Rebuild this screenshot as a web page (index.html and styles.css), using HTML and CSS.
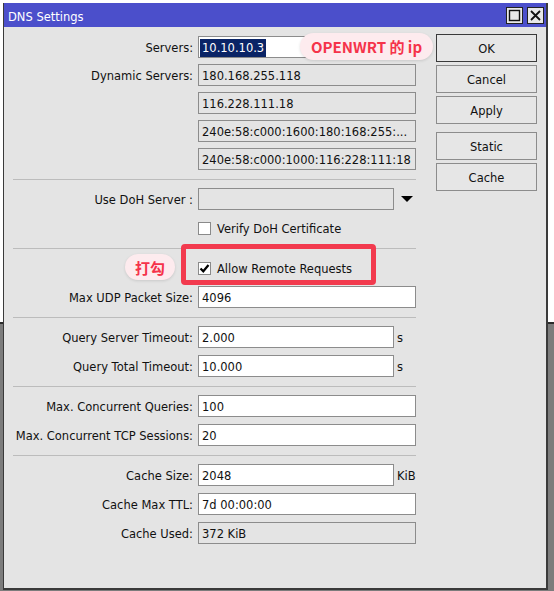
FILE: index.html
```html
<!DOCTYPE html>
<html>
<head>
<meta charset="utf-8">
<link rel="stylesheet" href="styles.css">
</head>
<body>
<div class="desktop">
  <div class="window">
    <div class="titlebar">
      <span class="title">DNS Settings</span>
      <div class="tbtns">
        <span class="tbtn"><svg width="13" height="13" viewBox="0 0 13 13"><rect x="1.5" y="1.5" width="10" height="10" fill="none" stroke="#111" stroke-width="1.4"/></svg></span>
        <span class="tbtn"><svg width="13" height="13" viewBox="0 0 13 13"><path d="M2 2 L11 11 M11 2 L2 11" stroke="#111" stroke-width="1.8" fill="none"/></svg></span>
      </div>
    </div>
    <div class="wbody">
      <div class="form">
        <div class="group g1">
          <div class="row"><label>Servers:</label><div class="field"><div class="input edit"><span class="sel">10.10.10.3</span></div></div></div>
          <div class="row"><label>Dynamic Servers:</label><div class="field"><div class="input ro">180.168.255.118</div></div></div>
          <div class="row"><label></label><div class="field"><div class="input ro">116.228.111.18</div></div></div>
          <div class="row"><label></label><div class="field"><div class="input ro">240e:58:c000:1600:180:168:255:...</div></div></div>
          <div class="row"><label></label><div class="field"><div class="input ro">240e:58:c000:1000:116:228:111:18</div></div></div>
        </div>
        <div class="sep"></div>
        <div class="group">
          <div class="row"><label>Use DoH Server :</label><div class="field"><div class="input ro short"></div><svg class="dd" width="12" height="6" viewBox="0 0 12 6"><polygon points="0,0 12,0 6,6" fill="#000"/></svg></div></div>
          <div class="row"><label></label><div class="field"><span class="cb"></span><span class="ctext">Verify DoH Certificate</span></div></div>
        </div>
        <div class="sep"></div>
        <div class="group">
          <div class="row"><label></label><div class="field"><span class="cb"><svg width="11" height="11" viewBox="0 0 11 11"><path d="M1.5 5.5 L4.3 8.3 L9.5 2" stroke="#000" stroke-width="2.2" fill="none"/></svg></span><span class="ctext">Allow Remote Requests</span></div></div>
          <div class="row"><label>Max UDP Packet Size:</label><div class="field"><div class="input edit">4096</div></div></div>
        </div>
        <div class="sep"></div>
        <div class="group">
          <div class="row"><label>Query Server Timeout:</label><div class="field"><div class="input edit short">2.000</div><span class="unit">s</span></div></div>
          <div class="row"><label>Query Total Timeout:</label><div class="field"><div class="input edit short">10.000</div><span class="unit">s</span></div></div>
        </div>
        <div class="sep"></div>
        <div class="group">
          <div class="row"><label>Max. Concurrent Queries:</label><div class="field"><div class="input edit">100</div></div></div>
          <div class="row"><label>Max. Concurrent TCP Sessions:</label><div class="field"><div class="input edit">20</div></div></div>
        </div>
        <div class="sep"></div>
        <div class="group">
          <div class="row"><label>Cache Size:</label><div class="field"><div class="input edit short">2048</div><span class="unit">KiB</span></div></div>
          <div class="row"><label>Cache Max TTL:</label><div class="field"><div class="input edit">7d 00:00:00</div></div></div>
          <div class="row"><label>Cache Used:</label><div class="field"><div class="input ro">372 KiB</div></div></div>
        </div>
      </div>
      <div class="buttons">
        <div class="btn def">OK</div>
        <div class="btn">Cancel</div>
        <div class="btn">Apply</div>
        <div class="btn spaced">Static</div>
        <div class="btn">Cache</div>
      </div>
    </div>
    <div class="badge openwrt">OPENWRT 的 ip</div>
    <div class="badge dagou">打勾</div>
    <div class="redbox"></div>
  </div>
</div>
</body>
</html>
```
FILE: styles.css
```css
html, body {
  margin: 0;
  padding: 0;
}
body {
  width: 554px;
  height: 591px;
  overflow: hidden;
  background: linear-gradient(#ffffff 0 322px, #2a2a2a 322px 324px, #7c7c7c 324px);
  font-family: "DejaVu Sans", sans-serif;
  font-size: 11.5px;
  color: #111;
}
.desktop {
  padding: 3px 0 0 3px;
}
.window {
  position: relative;
  width: 545px;
  height: 587px;
  box-sizing: border-box;
  background: #e4e4e4;
  border: 1px solid #3a3a3a;
  border-top: 0;
  border-right-width: 2px;
  border-bottom-width: 2px;
  display: flex;
  flex-direction: column;
}
.titlebar {
  height: 24px;
  background: #4b4fcb;
  color: #fff;
  display: flex;
  align-items: center;
  justify-content: space-between;
  padding-left: 4px;
  padding-right: 2px;
}
.title {
  line-height: 24px;
  padding-top: 3px;
}
.tbtns {
  display: flex;
  gap: 4px;
}
.tbtn {
  width: 17px;
  height: 17px;
  box-sizing: border-box;
  border: 1px solid #222;
  background: #e8e8e8;
  display: flex;
  align-items: center;
  justify-content: center;
}
.wbody {
  display: flex;
}
.form {
  width: 412px;
  box-sizing: border-box;
  padding: 9px 0 0 9px;
}
.group {
  display: flex;
  flex-direction: column;
  gap: 7px;
}
.g1 {
  gap: 6px;
}
.row {
  display: grid;
  grid-template-columns: 180px 218px;
  column-gap: 5px;
  height: 22px;
  align-items: center;
}
.row label {
  text-align: right;
  white-space: nowrap;
  padding-top: 2px;
}
.sep {
  width: 403px;
  height: 1px;
  background: #bcbcbc;
  margin: 9px 0 8px;
}
.field {
  display: flex;
  align-items: center;
  white-space: nowrap;
}
.input {
  width: 218px;
  height: 22px;
  box-sizing: border-box;
  border: 1px solid #8c8c8c;
  padding-left: 3px;
  padding-top: 2px;
  display: flex;
  align-items: center;
  overflow: hidden;
  white-space: nowrap;
}
.input.short {
  width: 196px;
}
.edit {
  background: #ffffff;
}
.ro {
  background: #e4e4e4;
}
.sel {
  background: #0a2466;
  color: #fff;
  margin-left: -2px;
  margin-top: -1px;
  padding: 0 2px;
  height: 18px;
  line-height: 19px;
}
.unit,
.ctext {
  padding-top: 2px;
}
.unit {
  margin-left: 3px;
}
.dd {
  margin-left: 7px;
}
.cb {
  width: 13px;
  height: 13px;
  box-sizing: border-box;
  border: 1px solid #8a8a8a;
  background: #fff;
  margin-right: 6px;
  display: flex;
  align-items: center;
  justify-content: center;
}
.buttons {
  width: 101px;
  margin-left: 20px;
  padding-top: 7px;
  display: flex;
  flex-direction: column;
  gap: 3px;
}
.btn {
  height: 28px;
  box-sizing: border-box;
  border: 1px solid #8c8c8c;
  background: #e6e6e6;
  padding-top: 2px;
  display: flex;
  align-items: center;
  justify-content: center;
}
.btn.def {
  border-color: #3a3a3a;
}
.btn.spaced {
  margin-top: 5px;
}
.badge {
  position: absolute;
  display: flex;
  align-items: center;
  justify-content: center;
  background: #fdebee;
  color: #f5334a;
  font-family: "Noto Sans CJK SC", "Noto Sans", sans-serif;
  font-weight: 700;
  font-size: 15px;
  border-radius: 14px;
  box-shadow: 0 1px 3px rgba(0, 0, 0, 0.12);
}
.openwrt {
  left: 296px;
  top: 30px;
  width: 133px;
  height: 27px;
}
.dagou {
  left: 121px;
  top: 251px;
  width: 50px;
  height: 26px;
}
.redbox {
  position: absolute;
  left: 177px;
  top: 241px;
  width: 195px;
  height: 41px;
  box-sizing: border-box;
  border: 5px solid #f23a4e;
  border-radius: 4px;
}
```
